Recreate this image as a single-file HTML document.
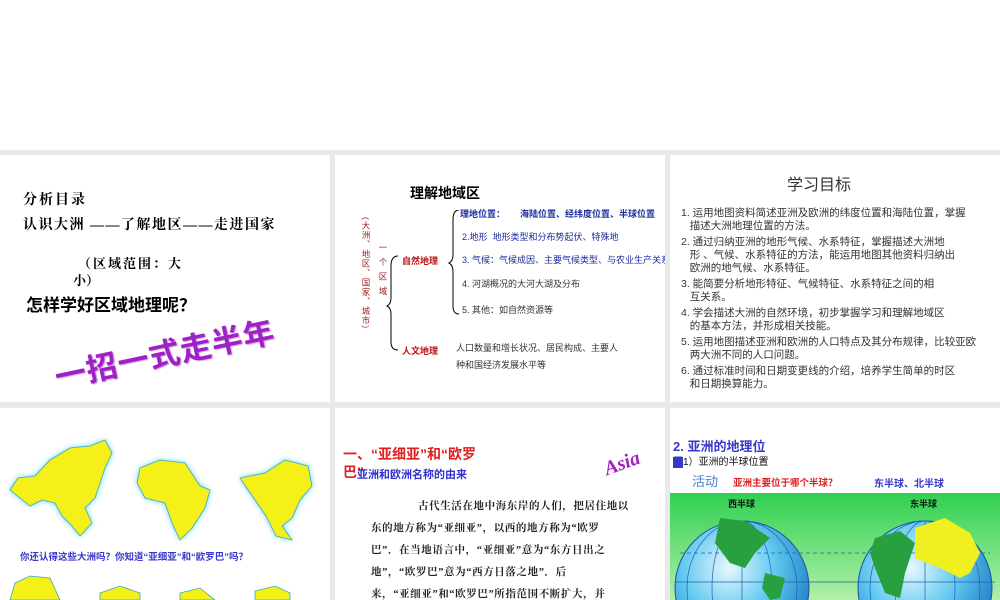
<!DOCTYPE html>
<html><head><meta charset="utf-8"><style>
*{margin:0;padding:0;box-sizing:border-box}
html,body{width:1000px;height:600px;overflow:hidden}
body{background:#fff;position:relative;font-family:"Liberation Sans","Noto Sans CJK SC",sans-serif}
.g{position:absolute;left:0;top:150px;width:1000px;height:450px;background:#e9e9e9}
.s{position:absolute;background:#fff;overflow:hidden}
.a{position:absolute;white-space:nowrap}
.serif{font-family:"Liberation Serif","Noto Serif CJK SC",serif}
.v{writing-mode:vertical-rl}
</style></head><body>
<div class="g"></div>

<!-- slide 1 -->
<div class="s" style="left:0;top:155px;width:330px;height:247px">
 <div class="a serif" style="left:23px;top:34px;font-size:14px;font-weight:bold;letter-spacing:2px">分析目录</div>
 <div class="a serif" style="left:23px;top:59px;font-size:14px;font-weight:bold;letter-spacing:1.5px">认识大洲 ——了解地区——走进国家</div>
 <div class="a serif" style="left:78px;top:98px;font-size:13px;font-weight:bold;letter-spacing:2px">（区域范围：大</div>
 <div class="a serif" style="left:73px;top:115px;font-size:13px;font-weight:bold">小）</div>
 <div class="a" style="left:26px;top:136px;font-size:17px;font-weight:bold">怎样学好区域地理呢？</div>
 <div class="a" style="left:50px;top:198px;font-size:31px;font-weight:bold;color:#a020c8;transform:rotate(-12deg);transform-origin:left top;letter-spacing:1px;text-shadow:1px 1px 1px #c890d8">一招一式走半年</div>
</div>

<!-- slide 2 -->
<div class="s" style="left:335px;top:155px;width:330px;height:247px;font-size:9px">
 <div class="a" style="left:75px;top:28px;font-size:14px;font-weight:bold">理解地域区</div>
 <div class="a v" style="left:26px;top:62px;font-size:8.5px;color:#a02020;line-height:10px;letter-spacing:1px">(大洲、地区、国家、城市)</div>
 <div class="a v" style="left:42px;top:88px;font-size:8.5px;color:#a02020;letter-spacing:6px">一个区域</div>
 <svg class="a" style="left:50px;top:55px" width="80" height="150"><path d="M13 46 Q6 46 6 56 L6 88 Q6 94 2 96 Q6 98 6 104 L6 132 Q6 140 13 140" fill="none" stroke="#000" stroke-width="1"/><path d="M74 0 Q68 0 68 10 L68 45 Q68 51 64 53 Q68 55 68 62 L68 96 Q68 104 74 104" fill="none" stroke="#000" stroke-width="1"/></svg>
 <div class="a" style="left:67px;top:99px;color:#c01010;font-weight:bold">自然地理</div>
 <div class="a" style="left:67px;top:189px;color:#c01010;font-weight:bold">人文地理</div>
 <div class="a" style="left:125px;top:52px;color:#1c2c9c;font-weight:bold">理地位置：&nbsp;&nbsp;&nbsp;&nbsp;&nbsp;&nbsp;海陆位置、经纬度位置、半球位置</div>
 <div class="a" style="left:127px;top:75px;color:#1c2c9c">2.地形 &nbsp;地形类型和分布势起伏、特殊地</div>
 <div class="a" style="left:127px;top:98px;color:#1c2c9c">3. 气候：气候成因、主要气候类型、与农业生产关系</div>
 <div class="a" style="left:127px;top:122px;color:#333">4. 河湖概况的大河大湖及分布</div>
 <div class="a" style="left:127px;top:148px;color:#333">5. 其他：如自然资源等</div>
 <div class="a" style="left:121px;top:186px;color:#333">人口数量和增长状况、居民构成、主要人</div>
 <div class="a" style="left:121px;top:203px;color:#333">种和国经济发展水平等</div>
</div>

<!-- slide 3 -->
<div class="s" style="left:670px;top:155px;width:330px;height:247px;font-size:10.5px;color:#333;line-height:13px">
 <div class="a" style="left:117px;top:24px;font-size:16px;color:#333">学习目标</div>
 <div class="a" style="left:11px;top:52px;white-space:normal;width:300px">1. 运用地图资料简述亚洲及欧洲的纬度位置和海陆位置，掌握<br>&nbsp;&nbsp;&nbsp;描述大洲地理位置的方法。</div>
 <div class="a" style="left:11px;top:81px;white-space:normal;width:300px">2. 通过归纳亚洲的地形气候、水系特征，掌握描述大洲地<br>&nbsp;&nbsp;&nbsp;形 、气候、水系特征的方法，能运用地图其他资料归纳出<br>&nbsp;&nbsp;&nbsp;欧洲的地气候、水系特征。</div>
 <div class="a" style="left:11px;top:123px;white-space:normal;width:300px">3. 能简要分析地形特征、气候特征、水系特征之间的相<br>&nbsp;&nbsp;&nbsp;互关系。</div>
 <div class="a" style="left:11px;top:152px;white-space:normal;width:300px">4. 学会描述大洲的自然环境，初步掌握学习和理解地域区<br>&nbsp;&nbsp;&nbsp;的基本方法，并形成相关技能。</div>
 <div class="a" style="left:11px;top:181px;white-space:normal;width:300px">5. 运用地图描述亚洲和欧洲的人口特点及其分布规律，比较亚欧<br>&nbsp;&nbsp;&nbsp;两大洲不同的人口问题。</div>
 <div class="a" style="left:11px;top:210px;white-space:normal;width:300px">6. 通过标准时间和日期变更线的介绍，培养学生简单的时区<br>&nbsp;&nbsp;&nbsp;和日期换算能力。</div>
</div>

<!-- slide 4 -->
<div class="s" style="left:0;top:408px;width:330px;height:192px">
 <svg class="a" style="left:0;top:0" width="330" height="192">
  <defs><filter id="gl" x="-20%" y="-20%" width="140%" height="140%"><feGaussianBlur stdDeviation="3"/></filter></defs>
  <g fill="#5ad0f0" filter="url(#gl)">
   <path d="M10 82 L18 70 L35 68 L50 52 L70 40 L90 38 L105 32 L112 45 L105 60 L100 75 L95 90 L85 100 L92 115 L80 128 L72 118 L62 108 L55 95 L42 92 L30 98 Z"/>
   <path d="M140 60 L160 52 L185 55 L200 78 L210 82 L205 100 L192 120 L180 132 L172 115 L165 95 L145 90 L137 75 Z"/>
   <path d="M240 70 L265 65 L285 52 L308 58 L312 78 L300 92 L292 110 L282 118 L292 132 L276 128 L266 108 L255 92 Z"/>
  </g>
  <g fill="#f4f018" stroke="#38a8c8" stroke-width="0.8">
   <path d="M10 82 L18 70 L35 68 L50 52 L70 40 L90 38 L105 32 L112 45 L105 60 L100 75 L95 90 L85 100 L92 115 L80 128 L72 118 L62 108 L55 95 L42 92 L30 98 Z"/>
   <path d="M140 60 L160 52 L185 55 L200 78 L210 82 L205 100 L192 120 L180 132 L172 115 L165 95 L145 90 L137 75 Z"/>
   <path d="M240 70 L265 65 L285 52 L308 58 L312 78 L300 92 L292 110 L282 118 L292 132 L276 128 L266 108 L255 92 Z"/>
   <path d="M15 175 L30 168 L50 170 L60 192 L10 192 Z"/>
   <path d="M100 185 L120 178 L140 185 L140 192 L100 192 Z"/>
   <path d="M180 185 L200 180 L215 192 L180 192 Z"/>
   <path d="M255 183 L275 178 L290 185 L290 192 L255 192 Z"/>
  </g>
 </svg>
 <div class="a" style="left:20px;top:141px;font-size:9.5px;color:#3838c8;font-weight:bold">你还认得这些大洲吗？你知道“亚细亚”和“欧罗巴”吗？</div>
</div>

<!-- slide 5 -->
<div class="s" style="left:335px;top:408px;width:330px;height:192px">
 <div class="a" style="left:8px;top:36px;font-size:14px;font-weight:bold;color:#e02020">一、“亚细亚”和“欧罗</div>
 <div class="a" style="left:8px;top:54px;font-size:14px;font-weight:bold;color:#e02020">巴”</div>
 <div class="a" style="left:22px;top:58px;font-size:11px;font-weight:bold;color:#3030d0">亚洲和欧洲名称的由来</div>
 <div class="a" style="left:274px;top:50px;font-size:20px;font-weight:bold;font-style:italic;color:#a020c0;font-family:'Liberation Serif',serif;transform:rotate(-20deg);transform-origin:left bottom">Asia</div>
 <div class="a serif" style="left:36px;top:88px;font-size:10.5px;line-height:22px;font-weight:bold;color:#222;letter-spacing:0.6px">
 <span style="padding-left:47px">古代生活在地中海东岸的人们，把居住地以</span><br>东的地方称为“亚细亚”，以西的地方称为“欧罗<br>巴”．在当地语言中，“亚细亚”意为“东方日出之<br>地”，“欧罗巴”意为“西方日落之地”．后<br>来，“亚细亚”和“欧罗巴”所指范围不断扩大，并</div>
</div>

<!-- slide 6 -->
<div class="s" style="left:670px;top:408px;width:330px;height:192px">
 <div class="a" style="left:3px;top:28px;font-size:13px;font-weight:bold;color:#3838c8">2. 亚洲的地理位</div>
 <div class="a" style="left:3px;top:45px;font-size:10px;color:#111"><span style="background:#3838c8;color:#3838c8">置</span>1）亚洲的半球位置</div>
 <div class="a" style="left:22px;top:63px;font-size:13px;color:#4a80d0">活动</div>
 <div class="a" style="left:63px;top:67px;font-size:9.5px;font-weight:bold;color:#e02020">亚洲主要位于哪个半球？</div>
 <div class="a" style="left:204px;top:67px;font-size:10px;font-weight:bold;color:#3838c8">东半球、北半球</div>
 <svg class="a" style="left:0;top:85px" width="330" height="107">
  <defs><radialGradient id="gb" cx="40%" cy="35%" r="70%"><stop offset="0" stop-color="#e8f8ff"/><stop offset="0.5" stop-color="#60c8f0"/><stop offset="1" stop-color="#1878c0"/></radialGradient>
  <linearGradient id="bg" x1="0" y1="0" x2="0" y2="1"><stop offset="0" stop-color="#30d050"/><stop offset="1" stop-color="#b0f0a8"/></linearGradient></defs>
  <rect width="330" height="107" fill="url(#bg)"/>
  <circle cx="72" cy="95" r="67" fill="url(#gb)" stroke="#2050a0"/>
  <circle cx="255" cy="95" r="67" fill="url(#gb)" stroke="#2050a0"/>
  <g fill="none" stroke="#2060b0" stroke-width="0.7">
   <ellipse cx="72" cy="95" rx="30" ry="67"/><ellipse cx="72" cy="95" rx="55" ry="67"/><line x1="72" y1="28" x2="72" y2="162"/>
   <ellipse cx="255" cy="95" rx="30" ry="67"/><ellipse cx="255" cy="95" rx="55" ry="67"/><line x1="255" y1="28" x2="255" y2="162"/>
   <line x1="5" y1="89" x2="325" y2="89"/><line x1="10" y1="60" x2="320" y2="60" stroke-dasharray="4 3"/>
  </g>
  <path d="M50 25 L75 28 L100 45 L85 60 L75 75 L60 70 L45 50 Z M95 80 L115 85 L110 105 L100 107 L92 95 Z" fill="#28a040"/>
  <path d="M205 45 L230 38 L245 50 L240 65 L235 80 L230 105 L215 100 L205 75 L200 60 Z" fill="#28a040"/>
  <path d="M245 35 L275 25 L300 40 L310 60 L300 80 L290 85 L270 75 L245 65 Z" fill="#f0f020"/>
  <text x="58" y="14" font-size="9" font-weight="bold" fill="#111" font-family="Noto Sans CJK SC,sans-serif">西半球</text>
  <text x="240" y="14" font-size="9" font-weight="bold" fill="#111" font-family="Noto Sans CJK SC,sans-serif">东半球</text>
 </svg>
</div>
</body></html>
